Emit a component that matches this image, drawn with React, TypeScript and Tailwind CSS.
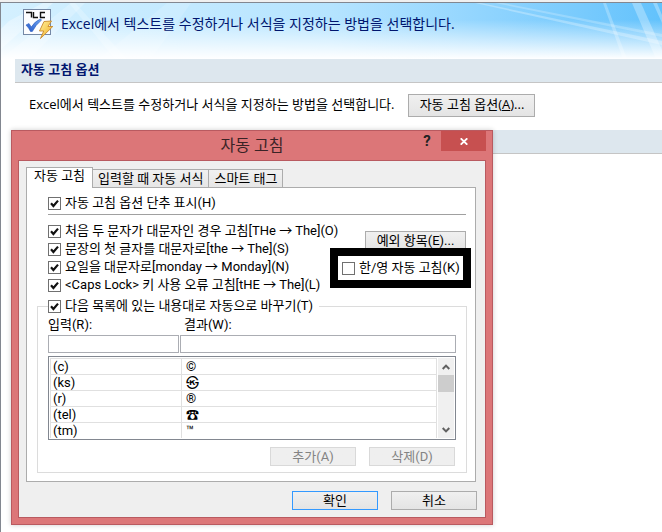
import { useState } from 'react';
import type { ButtonHTMLAttributes, ReactNode } from 'react';

const rules = [
  '처음 두 문자가 대문자인 경우 고침[THe → The](O)',
  '문장의 첫 글자를 대문자로[the → The](S)',
  '요일을 대문자로[monday → Monday](N)',
  '<Caps Lock> 키 사용 오류 고침[tHE → The](L)',
];

const entries = [
  { input: '(c)', result: '©' },
  { input: '(ks)', result: '㉿' },
  { input: '(r)', result: '®' },
  { input: '(tel)', result: '☎' },
  { input: '(tm)', result: '™' },
];

const tabs = ['자동 고침', '입력할 때 자동 서식', '스마트 태그'];

function Check({ children, defaultChecked = false }: { children: ReactNode; defaultChecked?: boolean }) {
  return (
    <label className="flex items-center gap-1 whitespace-nowrap">
      <span className="grid shrink-0">
        <input
          type="checkbox"
          defaultChecked={defaultChecked}
          className="peer col-start-1 row-start-1 size-[13px] appearance-none border border-[#707070] bg-white"
        />
        <svg
          viewBox="0 0 13 13"
          className="pointer-events-none col-start-1 row-start-1 hidden size-[13px] peer-checked:block"
        >
          <path d="M3 6.2 L5.4 9 L10 3.6" fill="none" stroke="#111" strokeWidth="2.2" />
        </svg>
      </span>
      <span>{children}</span>
    </label>
  );
}

function Button({ className = '', ...props }: ButtonHTMLAttributes<HTMLButtonElement>) {
  return (
    <button
      type="button"
      className={`flex items-center justify-center whitespace-nowrap border border-[#acacac] bg-linear-to-b from-[#f0f0f0] to-[#e4e4e4] disabled:border-[#d9d9d9] disabled:from-[#efefef] disabled:to-[#efefef] disabled:text-[#838383] ${className}`}
      {...props}
    />
  );
}

function AutoCorrectIcon() {
  return (
    <svg viewBox="0 0 32 32" className="size-8 shrink-0">
      <defs>
        <linearGradient id="bolt" x1="0" y1="0" x2="1" y2="1">
          <stop offset="0" stopColor="#fff3a0" />
          <stop offset="1" stopColor="#f0a91c" />
        </linearGradient>
        <linearGradient id="tick" x1="0" y1="1" x2="1" y2="0">
          <stop offset="0" stopColor="#2458c8" />
          <stop offset="1" stopColor="#6ea6f4" />
        </linearGradient>
      </defs>
      <rect x="0.5" y="1.5" width="27" height="25" fill="#fcfdff" stroke="#7488a6" />
      <path d="M3 4.5 H8.5 V9.5 M10.5 4 V9.5 H15 M22 4.5 H17.5 V9.5 H22" fill="none" stroke="#111" strokeWidth="1.4" />
      <path d="M3 17 L6 15.5 L8.3 19 Q12 13 17.5 11 L18.5 12 Q12.5 17 9.3 23.5 L7.5 23.5 Q6 20 3 17Z" fill="url(#tick)" stroke="#2b5cc0" strokeWidth="0.6" />
      <path d="M21 13.5 L28.5 13 L25 18.5 L29.8 18.5 L17.5 30.5 L20.7 23 L16.5 23Z" fill="url(#bolt)" stroke="#c98a2c" strokeWidth="0.9" />
    </svg>
  );
}

function Streaks() {
  return (
    <svg viewBox="0 0 661 56" preserveAspectRatio="none" className="absolute inset-0 h-full w-full">
      <g fill="#fff">
        <path d="M8 18 L42 0 H52 L0 46 V26Z" opacity="0.35" />
        <path d="M0 56 L70 0 H84 L28 56Z" opacity="0.22" />
        <path d="M68 0 H74 L126 56 H114Z" opacity="0.22" />
        <path d="M98 56 L166 0 H190 L150 56Z" opacity="0.15" />
        <path d="M480 0 L661 38 V42 L474 0Z" opacity="0.28" />
        <path d="M502 0 L661 31 V34 L494 0Z" opacity="0.22" />
        <path d="M602 0 H605 L626 56 H622Z" opacity="0.25" />
        <path d="M631 0 H640 L661 47 V56 H655Z" opacity="0.3" />
        <path d="M652 0 H656 L661 12 V20Z" opacity="0.3" />
      </g>
    </svg>
  );
}

function AutoCorrectDialog() {
  const [active, setActive] = useState(0);

  return (
    <div
      role="dialog"
      aria-labelledby="dialog-title"
      className="absolute top-[130px] left-[11px] w-full max-w-[482px] border border-[#b95a60] bg-[#dc7678] px-[6px] pb-[6px] font-['Roboto','Noto_Sans_CJK_KR',sans-serif] text-[13px] leading-4 shadow-[0_0_5px_rgba(0,0,0,0.2)]"
    >
      {/* Title bar */}
      <div className="grid h-[29px] grid-cols-[1fr_auto_1fr] items-start">
        <h2 id="dialog-title" className="col-start-2 self-center text-[16px] leading-5 text-[#3a2326]">
          자동 고침
        </h2>
        <div className="flex justify-end">
          <button type="button" aria-label="도움말" className="h-5 w-7 text-[15px] font-bold text-[#222]">
            ?
          </button>
          <button type="button" aria-label="닫기" className="flex h-5 w-[45px] items-center justify-center bg-[#c75050]">
            <svg viewBox="0 0 8 7" className="h-[7px] w-2">
              <path d="M0.7 0.3 L7.3 6.7 M7.3 0.3 L0.7 6.7" stroke="#fff" strokeWidth="1.8" />
            </svg>
          </button>
        </div>
      </div>

      <div className="border border-[#b95a60] bg-[#efefef] pt-[6px] pr-2 pb-[7px] pl-[7px]">
        {/* Tabs */}
        <div role="tablist" className="flex items-end">
          {tabs.map((tab, index) => (
            <button
              key={tab}
              type="button"
              role="tab"
              aria-selected={index === active}
              onClick={() => setActive(index)}
              className={
                index === active
                  ? 'relative z-10 -mb-px h-[21px] border border-b-0 border-[#acacac] bg-white px-[7px] pb-1 whitespace-nowrap'
                  : 'h-[18px] border border-b-0 border-l-0 border-[#acacac] bg-linear-to-b from-[#f1f1f1] to-[#e6e6e6] px-[5px] whitespace-nowrap'
              }
            >
              {tab}
            </button>
          ))}
        </div>

        <div role="tabpanel" className="mr-px border border-[#acacac] bg-white pt-[7px] pr-2 pb-2 pl-[10px]">
          <div className="mr-px ml-[11px] border-b border-[#a0a0a0] pb-[3px]">
            <Check defaultChecked>자동 고침 옵션 단추 표시(H)</Check>
          </div>

          <div className="relative mt-[7px] mr-px ml-[11px]">
            <div className="leading-[18px]">
              {rules.map((rule) => (
                <Check key={rule} defaultChecked>
                  {rule}
                </Check>
              ))}
            </div>
            <Button className="absolute top-[9px] right-0 h-5 w-[101px]">예외 항목(E)...</Button>
            <div className="absolute top-[26px] -right-[5px] flex h-10 w-[141px] items-center border-8 border-black bg-white pl-1">
              <Check>한/영 자동 고침(K)</Check>
            </div>
          </div>

          <fieldset className="mt-1 min-w-0 border border-[#dcdcdc] px-[10px] pb-[6px]">
            <legend className="pr-[6px]">
              <Check defaultChecked>다음 목록에 있는 내용대로 자동으로 바꾸기(T)</Check>
            </legend>

            <div className="mt-[3px] flex gap-px">
              <div className="flex w-[131px] flex-col gap-[2px]">
                <label htmlFor="replace">입력(R):</label>
                <input id="replace" type="text" className="h-[18px] w-full border border-[#abadb3] bg-white px-1" />
              </div>
              <div className="flex flex-1 flex-col gap-[2px]">
                <label htmlFor="with" className="pl-1">
                  결과(W):
                </label>
                <input id="with" type="text" className="h-[18px] w-full border border-[#abadb3] bg-white px-1" />
              </div>
            </div>

            <div className="mt-[3px] flex border border-[#828790] p-px">
              <table className="flex-1 table-fixed border-separate border-spacing-0 border-r border-[#e0e0e0]">
                <tbody>
                  {entries.map((entry) => (
                    <tr key={entry.input}>
                      <td className="h-4 w-[131px] border-t border-l border-[#e0e0e0] pl-[2px] leading-[15px]">
                        {entry.input}
                      </td>
                      <td className="h-4 border-t border-l border-[#e0e0e0] pl-1 leading-[15px]">{entry.result}</td>
                    </tr>
                  ))}
                </tbody>
              </table>
              <div className="ml-px flex w-4 flex-col items-center bg-[#f0f0f0]">
                <button type="button" aria-label="위로" className="flex h-[17px] w-full items-center justify-center">
                  <svg viewBox="0 0 8 6" className="h-[6px] w-2">
                    <path d="M0.7 5 L4 1.6 L7.3 5" fill="none" stroke="#606060" strokeWidth="2" />
                  </svg>
                </button>
                <div className="h-[17px] w-full bg-[#cdcdcd]" />
                <button
                  type="button"
                  aria-label="아래로"
                  className="mt-auto flex h-[17px] w-full items-center justify-center"
                >
                  <svg viewBox="0 0 8 6" className="h-[6px] w-2">
                    <path d="M0.7 1 L4 4.4 L7.3 1" fill="none" stroke="#606060" strokeWidth="2" />
                  </svg>
                </button>
              </div>
            </div>

            <div className="mt-[7px] flex justify-end gap-[13px] pr-px">
              <Button disabled className="h-[19px] w-[86px]">
                추가(A)
              </Button>
              <Button disabled className="h-[19px] w-[86px]">
                삭제(D)
              </Button>
            </div>
          </fieldset>
        </div>

        <div className="mt-[9px] flex justify-end gap-[13px]">
          <button
            type="button"
            className="flex h-[19px] w-[86px] items-center justify-center border border-[#3399ff] bg-linear-to-b from-[#f0f0f0] to-[#e4e4e4]"
          >
            확인
          </button>
          <Button className="h-[19px] w-[86px]">취소</Button>
        </div>
      </div>
    </div>
  );
}

export default function App() {
  return (
    <main className="relative min-h-screen overflow-hidden bg-[#f0f0f0] pt-[2px] font-['Open_Sans','Noto_Sans_CJK_KR',sans-serif] text-[13px] text-black">
      <div className="min-h-[530px] border-t border-l border-[#828790] bg-white">
        <header className="relative bg-linear-to-r from-[#d4f0ff] via-[#b5e4ff] to-[#62c2fc]">
          <Streaks />
          <div className="relative flex h-14 items-start gap-[6px] bg-linear-to-b from-transparent from-30% to-white pt-[5px] pl-[22px]">
            <AutoCorrectIcon />
            <h1 className="pt-[6px] text-[14px] leading-5 whitespace-nowrap text-[#00156e]">
              Excel에서 텍스트를 수정하거나 서식을 지정하는 방법을 선택합니다.
            </h1>
          </div>
        </header>

        <section className="pl-[14px]">
          <h2 className="h-6 border-b border-[#c5c5c5] bg-[#dde7ee] pl-[6px] leading-[21px] font-bold text-[#00156e]">
            자동 고침 옵션
          </h2>
          <div className="flex h-[47px] items-center gap-[14px] pb-[3px] pl-[14px]">
            <p className="whitespace-nowrap">Excel에서 텍스트를 수정하거나 서식을 지정하는 방법을 선택합니다.</p>
            <Button className="h-[23px] w-[127px] shrink-0">
              <span>
                자동 고침 옵션(<u>A</u>)...
              </span>
            </Button>
          </div>
          <div className="h-6 border-b border-[#c5c5c5] bg-[#dde7ee]" />
        </section>
      </div>

      <AutoCorrectDialog />
    </main>
  );
}
